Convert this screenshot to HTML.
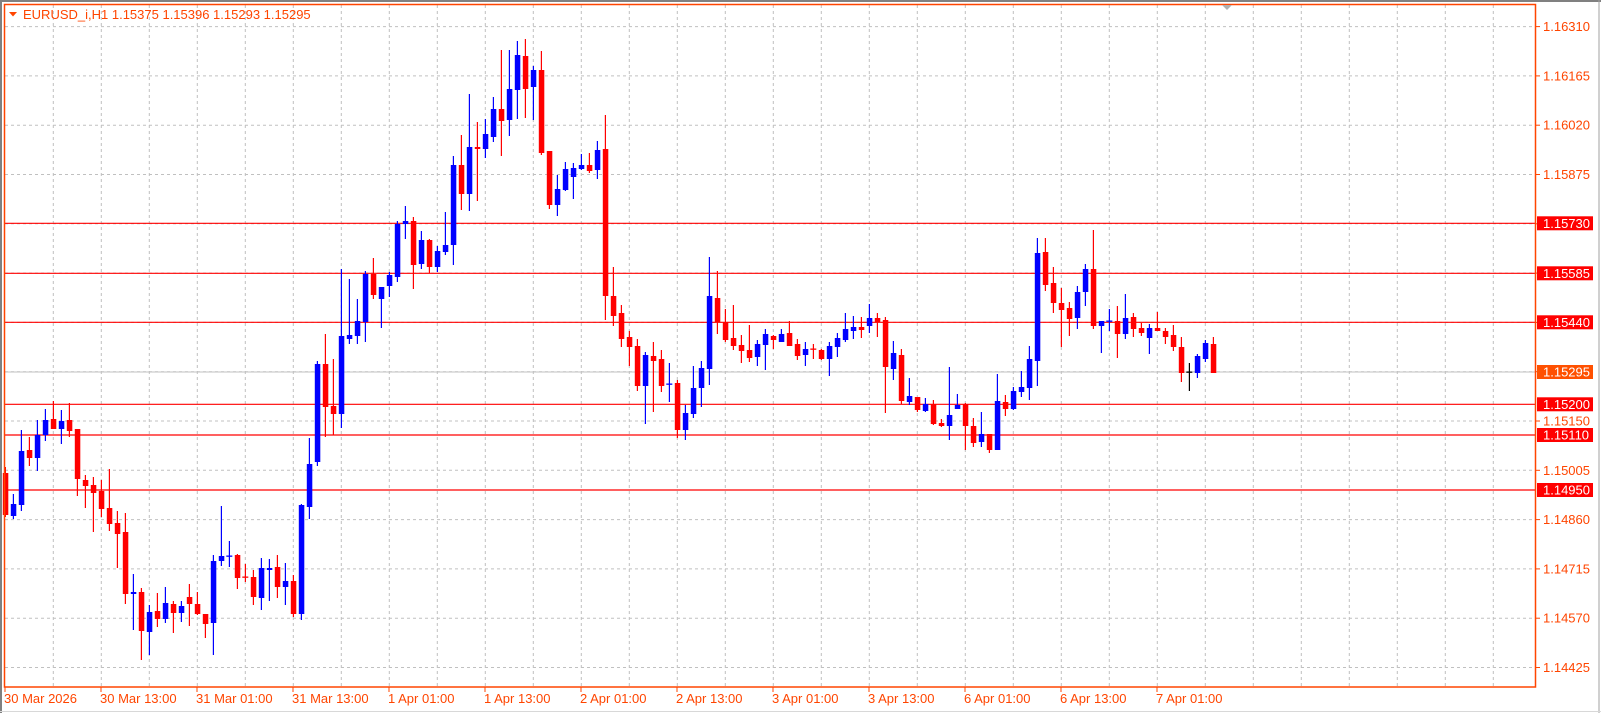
<!DOCTYPE html>
<html><head><meta charset="utf-8"><style>
html,body{margin:0;padding:0;background:#fff;width:1601px;height:713px;overflow:hidden}
svg{display:block}
text{font-family:"Liberation Sans",sans-serif;font-size:13px}
</style></head><body>
<svg id="s" width="1601" height="713" xmlns="http://www.w3.org/2000/svg">
<rect x="0" y="0" width="1601" height="713" fill="#fff"/>
<line x1="0" y1="1" x2="1601" y2="1" stroke="#808080" stroke-width="2"/>
<line x1="1" y1="0" x2="1" y2="713" stroke="#808080" stroke-width="2"/>
<line x1="1599" y1="0" x2="1599" y2="713" stroke="#a0a0a0" stroke-width="1"/>
<line x1="0" y1="711.5" x2="1601" y2="711.5" stroke="#d8d8d8" stroke-width="1"/>
<g id="grid"></g>
<g id="lines"></g>
<g id="candles"></g>
<rect x="4.5" y="4.5" width="1531" height="682.5" fill="none" stroke="#ff4500" stroke-width="1.5"/>
<polygon points="1222,5 1232,5 1227,10" fill="#b0b0b0"/>
<polygon points="9,12 17,12 13,16.5" fill="#ff4500"/>
<text x="23" y="19" fill="#ff4500" font-size="12.5">EURUSD_i,H1  1.15375 1.15396 1.15293 1.15295</text>
<g id="axis"></g>
</svg>
<script>
var NS="http://www.w3.org/2000/svg";
function el(p,t,a,txt){var e=document.createElementNS(NS,t);for(var k in a)e.setAttribute(k,a[k]);if(txt!==undefined)e.textContent=txt;document.getElementById(p).appendChild(e);return e;}
// grid
for(var n=1;n<=31;n++){var x=5.3+48*n;el('grid','line',{x1:x,y1:5,x2:x,y2:687,stroke:'#c0c0c0','stroke-dasharray':'3,3','stroke-width':1});}
var gy=[];for(var n=0;n<=13;n++){var y=26.6+49.3*n;gy.push(y);el('grid','line',{x1:5,y1:y,x2:1535,y2:y,stroke:'#c0c0c0','stroke-dasharray':'3,3','stroke-width':1});}
// price labels
var pl=["1.16310","1.16165","1.16020","1.15875","1.15730","1.15585","1.15440","1.15295","1.15150","1.15005","1.14860","1.14715","1.14570","1.14425"];
for(var i=0;i<pl.length;i++){el('axis','line',{x1:1535,y1:gy[i],x2:1540,y2:gy[i],stroke:'#ff4500'});el('axis','text',{x:1543,y:gy[i]+4.5,fill:'#ff4500'},pl[i]);}
// red lines
var rl=[[223.3,"1.15730"],[273.3,"1.15585"],[322.3,"1.15440"],[404.3,"1.15200"],[435,"1.15110"],[490,"1.14950"]];
el('lines','line',{x1:5,y1:372,x2:1535,y2:372,stroke:'#c0c0c0','stroke-width':1});
rl.forEach(function(r){el('lines','line',{x1:5,y1:r[0],x2:1535,y2:r[0],stroke:'#ff0000','stroke-width':1.2});
el('axis','rect',{x:1537,y:r[0]-7,width:56,height:14,fill:'#ff0000'});el('axis','text',{x:1543,y:r[0]+4.5,fill:'#fff'},r[1]);});
el('axis','rect',{x:1537,y:372-7,width:56,height:14,fill:'#ff5000'});el('axis','text',{x:1543,y:372+4.5,fill:'#fff'},"1.15295");
// time labels
var tl=["30 Mar 2026","30 Mar 13:00","31 Mar 01:00","31 Mar 13:00","1 Apr 01:00","1 Apr 13:00","2 Apr 01:00","2 Apr 13:00","3 Apr 01:00","3 Apr 13:00","6 Apr 01:00","6 Apr 13:00","7 Apr 01:00"];
for(var i=0;i<tl.length;i++){var x=5+96*i;el('axis','line',{x1:x,y1:687,x2:x,y2:692,stroke:'#ff4500'});el('axis','text',{x:x-1,y:703,fill:'#ff4500'},tl[i]);}
// candles: [top,bot,high,low,color]
var C=[
[473,515,467,517,'r'],[504,516,494,519,'b'],[451,505,430,511,'b'],[450,458,437,466,'r'],[435,458,420,471,'b'],[420,435,409,441,'b'],[419,429,401,429,'r'],[421,429,410,444,'b'],[420,431,403,437,'r'],[429,479,429,496,'r'],
[480,486,475,508,'r'],[485,493,477,532,'r'],[491,509,480,517,'r'],[508,524,469,531,'r'],[523,534,511,568,'r'],[532,594,513,604,'r'],[592,594,574,630,'b'],[592,631,588,660,'r'],[612,632,605,655,'b'],[611,619,593,627,'r'],
[603,619,587,623,'b'],[604,613,601,633,'r'],[606,613,601,622,'b'],[597,604,584,626,'r'],[604,614,592,615,'r'],[614,624,614,638,'r'],[561,623,555,655,'b'],[556,561,506,566,'b'],[556,557,541,567,'b'],[555,578,554,589,'r'],
[577,578,564,582,'r'],[577,597,570,605,'r'],[568,598,558,610,'b'],[568,570,559,601,'b'],[567,587,555,598,'r'],[581,587,563,605,'b'],[581,614,575,617,'r'],[505,614,504,620,'b'],[464,507,438,519,'b'],[364,462,361,466,'b'],
[364,407,334,437,'r'],[406,414,359,435,'r'],[336,414,269,428,'b'],[335,339,279,344,'b'],[321,336,299,344,'b'],[274,322,271,342,'b'],[274,295,258,299,'r'],[287,299,287,328,'b'],[275,286,272,297,'b'],[224,277,221,282,'b'],
[221,224,206,239,'b'],[221,265,217,289,'r'],[240,264,231,269,'b'],[240,267,239,273,'r'],[251,267,246,272,'b'],[245,252,212,255,'b'],[165,245,156,265,'b'],[165,194,135,210,'r'],[147,194,94,211,'b'],[147,149,122,201,'r'],
[134,149,119,158,'b'],[109,137,97,142,'b'],[109,121,50,156,'r'],[89,120,50,136,'b'],[55,90,41,119,'b'],[56,89,39,118,'r'],[70,87,66,120,'b'],[70,153,51,155,'r'],[151,205,151,209,'r'],[189,205,175,216,'b'],
[169,190,162,191,'b'],[168,177,163,199,'b'],[165,169,154,170,'b'],[165,171,153,173,'r'],[150,170,141,179,'b'],[149,296,115,320,'r'],[296,316,267,326,'r'],[313,339,305,347,'r'],[337,347,331,366,'r'],[346,386,339,391,'r'],
[355,386,352,424,'b'],[356,361,342,412,'r'],[359,386,350,392,'r'],[384,385,363,402,'b'],[383,430,380,438,'r'],[413,430,405,440,'b'],[388,414,366,418,'b'],[368,388,361,407,'b'],[296,369,257,385,'b'],[298,322,271,334,'r'],
[322,340,309,342,'r'],[338,346,305,350,'r'],[345,351,335,363,'r'],[350,358,325,362,'r'],[344,357,340,366,'b'],[334,345,329,370,'b'],[336,340,335,349,'r'],[334,342,329,342,'b'],[333,346,321,346,'r'],[344,356,339,360,'r'],
[349,355,342,366,'b'],[349,350,344,359,'r'],[350,359,349,360,'r'],[346,359,342,376,'b'],[338,347,333,357,'b'],[329,340,313,342,'b'],[327,331,316,339,'b'],[327,330,317,338,'r'],[318,326,304,333,'b'],[318,322,313,337,'r'],
[320,367,317,413,'r'],[353,369,341,380,'b'],[355,401,349,404,'r'],[396,402,378,405,'b'],[397,410,397,412,'r'],[404,411,398,412,'b'],[404,424,400,425,'r'],[423,426,419,427,'r'],[415,426,367,440,'b'],[405,409,394,409,'b'],
[404,426,403,450,'r'],[426,443,418,447,'r'],[434,442,412,447,'b'],[434,450,434,453,'r'],[401,450,374,450,'b'],[402,409,395,416,'r'],[391,409,387,410,'b'],[387,392,371,397,'b'],[359,388,346,400,'b'],[253,361,238,386,'b'],
[252,285,238,291,'r'],[283,303,267,313,'r'],[303,310,288,347,'r'],[308,319,302,336,'r'],[292,318,286,329,'b'],[269,292,264,306,'b'],[269,326,230,329,'r'],[321,326,321,353,'b'],[321,322,309,331,'b'],[321,334,306,358,'r'],
[318,334,294,339,'b'],[317,329,313,337,'r'],[328,333,323,336,'r'],[328,338,324,354,'b'],[328,331,312,331,'r'],[331,337,328,344,'r'],[335,347,325,351,'r'],[347,373,337,382,'r'],[372,372,363,391,'k'],[356,373,354,378,'b'],
[343,359,340,362,'b'],[344,373,337,373,'r']];
var col={r:'#ff0000',b:'#0000ff',k:'#000000'};
for(var k=0;k<C.length;k++){var c=C[k],x=5.3+8*k,f=col[c[4]];
el('candles','rect',{x:x-0.5,y:c[2],width:1.2,height:Math.max(1,c[3]-c[2]),fill:f});
if(c[1]-c[0]<1.5){el('candles','rect',{x:x-3,y:c[0]-0.5,width:6,height:1.3,fill:f});}
else el('candles','rect',{x:x-2.5,y:c[0],width:5.5,height:c[1]-c[0],fill:f});}
</script>
</body></html>
